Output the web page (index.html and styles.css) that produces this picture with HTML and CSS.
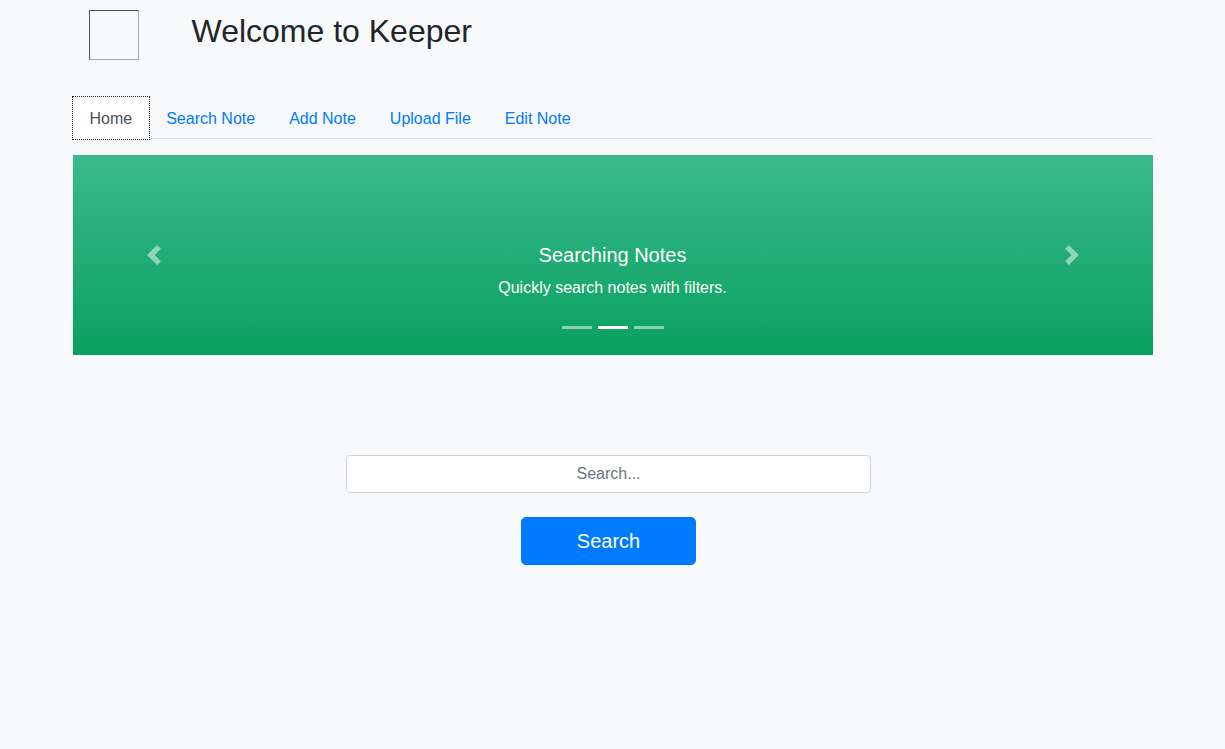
FILE: index.html
```html
<!DOCTYPE html>
<html lang="en">
<head>
<meta charset="utf-8">
<title>Keeper</title>
<link rel="stylesheet" href="styles.css">
</head>
<body>
<div class="container">
  <header class="header">
    <div class="logo"></div>
    <h2 class="title">Welcome to Keeper</h2>
  </header>
  <ul class="tabs">
    <li><a class="tab active" href="#">Home</a></li>
    <li><a class="tab" href="#">Search Note</a></li>
    <li><a class="tab" href="#">Add Note</a></li>
    <li><a class="tab" href="#">Upload File</a></li>
    <li><a class="tab" href="#">Edit Note</a></li>
  </ul>
  <div class="carousel">
    <a class="control" href="#">
      <svg width="20" height="20" viewBox="0 0 8 8"><path fill="#fff" d="M5.25 0l-4 4 4 4 1.5-1.5-2.5-2.5 2.5-2.5-1.5-1.5z"/></svg>
    </a>
    <div class="center">
      <h5 class="cap-title">Searching Notes</h5>
      <p class="cap-text">Quickly search notes with filters.</p>
      <ol class="indicators">
        <li></li>
        <li class="on"></li>
        <li></li>
      </ol>
    </div>
    <a class="control" href="#">
      <svg width="20" height="20" viewBox="0 0 8 8"><path fill="#fff" d="M2.75 0l-1.5 1.5 2.5 2.5-2.5 2.5 1.5 1.5 4-4-4-4z"/></svg>
    </a>
  </div>
  <form class="search">
    <input class="search-input" type="text" placeholder="Search...">
    <button class="search-btn" type="button">Search</button>
  </form>
</div>
</body>
</html>
```

FILE: styles.css
```css
* { box-sizing: border-box; }
html, body { margin: 0; padding: 0; }
body {
  background: #f8f9fa;
  font-family: "Liberation Sans", Arial, sans-serif;
  font-size: 16px;
  line-height: 1.5;
  color: #212529;
}
.container {
  width: 1080px;
  margin: 0 auto;
}
.header {
  display: flex;
  align-items: flex-start;
  padding-top: 10px;
  height: 97px;
}
.logo {
  width: 50px;
  height: 50px;
  margin-left: 16px;
  border: 1px solid;
  border-color: #505050 #a9a9a9 #a9a9a9 #505050;
}
.title {
  margin: 2px 0 0 53px;
  font-size: 32px;
  font-weight: 400;
  line-height: 1.2;
  color: #212529;
}
.tabs {
  display: flex;
  list-style: none;
  margin: 0;
  padding: 0;
  border-bottom: 1px solid #dee2e6;
}
.tab {
  display: block;
  padding: 9px 16px 7px;
  border: 1px solid transparent;
  border-top-left-radius: 4px;
  border-top-right-radius: 4px;
  margin-bottom: -1px;
  color: #007bff;
  text-decoration: none;
}
.tab.active {
  background: #fff;
  color: #495057;
  border-color: #fff;
  border-radius: 0;
  outline: 1px dotted #212529;
}
.carousel {
  margin-top: 16px;
  height: 200px;
  display: grid;
  grid-template-columns: 162px 1fr 162px;
  background: linear-gradient(to bottom, #3bb98e, #09a15e);
  color: #fff;
}
.control {
  display: flex;
  align-items: center;
  justify-content: center;
  opacity: 0.5;
}
.center {
  text-align: center;
  padding-top: 88px;
}
.cap-title {
  margin: 0 0 9px;
  font-size: 20px;
  font-weight: 400;
  line-height: 1.2;
}
.cap-text {
  margin: 0;
  font-size: 16px;
  line-height: 24px;
}
.indicators {
  display: flex;
  justify-content: center;
  list-style: none;
  margin: 26px 0 0;
  padding: 0;
}
.indicators li {
  width: 30px;
  height: 3px;
  margin: 0 3px;
  background: #fff;
  opacity: 0.5;
}
.indicators li.on { opacity: 1; }
.search {
  display: flex;
  flex-direction: column;
  align-items: center;
  margin-top: 100px;
  padding-right: 8px;
}
.search-input {
  width: 525px;
  height: 38px;
  padding: 6px 12px;
  font-family: inherit;
  font-size: 16px;
  text-align: center;
  color: #495057;
  background: #fff;
  border: 1px solid #ced4da;
  border-radius: 4px;
}
.search-input::placeholder { color: #6c757d; }
.search-btn {
  margin-top: 24px;
  width: 175px;
  height: 48px;
  font-family: inherit;
  font-size: 20px;
  color: #fff;
  background: #007bff;
  border: 1px solid #007bff;
  border-radius: 4.8px;
}
```
